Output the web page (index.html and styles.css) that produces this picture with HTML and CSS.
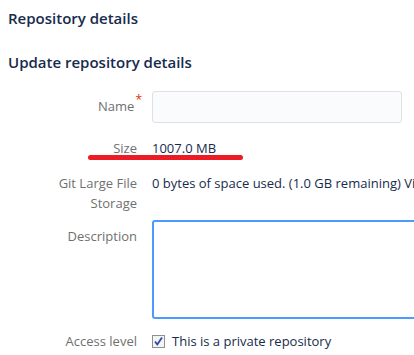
FILE: index.html
```html
<!DOCTYPE html>
<html lang="en">
<head>
    <meta charset="UTF-8">
    <meta name="viewport" content="width=device-width, initial-scale=1.0">
    <title>Repository details</title>
    <link rel="stylesheet" href="styles.css">
</head>
<body>

<h2 class="page-title">Repository details</h2>
<h3 class="section-title">Update repository details</h3>

<form class="details-form">
    <div class="row row-name">
        <label for="repoName">Name<span class="required">*</span></label>
        <div class="field"><input type="text" id="repoName"></div>
    </div>

    <div class="row row-size">
        <span class="label">Size</span>
        <div class="field value">1007.0 MB</div>
        <span class="scribble"></span>
    </div>

    <div class="row row-lfs">
        <span class="label">Git Large File<br>Storage</span>
        <div class="field value nowrap">0 bytes of space used. (1.0 GB remaining) View</div>
    </div>

    <div class="row row-desc">
        <label for="repoDesc">Description</label>
        <div class="field"><textarea id="repoDesc"></textarea></div>
    </div>

    <div class="row row-access">
        <span class="label">Access level</span>
        <div class="field value">
            <label class="check">
                <span class="box">
                    <svg width="13" height="13" viewBox="0 0 13 13">
                        <rect x="0.5" y="0.5" width="12" height="12" fill="#f4f4f4" stroke="#8e8f8f"/>
                        <path d="M3 6.5 L5.3 9.5 L10 2.5" fill="none" stroke="#2e49a5" stroke-width="1.8"/>
                    </svg>
                </span>
                This is a private repository
            </label>
        </div>
    </div>
</form>

</body>
</html>
```

FILE: styles.css
```css
html, body {
    overflow: hidden;
}
body {
    font-family: "Open Sans", Arial, sans-serif;
    font-size: 13px;
    line-height: 20px;
    color: #172b4d;
    margin: 0;
    padding: 0 8px;
}
.page-title,
.section-title {
    font-size: 15px;
    font-weight: 600;
    line-height: 20px;
    margin: 0;
}
.page-title {
    padding-top: 8px;
}
.section-title {
    margin-top: 24px;
}
.details-form {
    margin-top: 19px;
}
.row {
    position: relative;
    display: grid;
    grid-template-columns: 129px 1fr;
    column-gap: 15px;
}
.row > label,
.row > .label {
    color: #707070;
    text-align: right;
}
.required {
    color: #de350b;
    font-size: 12px;
    vertical-align: top;
    position: relative;
    top: -6px;
    margin-left: 1px;
    margin-right: -5px;
}
.row-name > label {
    padding-top: 5px;
}
.row-name input {
    width: 250px;
    height: 32px;
    box-sizing: border-box;
    border: 1px solid #dfe1e6;
    border-radius: 3px;
    background: #fafbfc;
}
.row-size {
    margin-top: 15px;
}
.row-lfs {
    margin-top: 15px;
}
.nowrap {
    white-space: nowrap;
}
.row-desc {
    margin-top: 7px;
}
.row-desc > label {
    padding-top: 6px;
}
.row-desc textarea {
    display: block;
    width: 330px;
    height: 99px;
    box-sizing: border-box;
    border: 2px solid #4c9aff;
    border-radius: 3px;
    background: #fff;
    resize: none;
}
.row-access {
    margin-top: 12px;
}
.check {
    display: inline-flex;
    align-items: center;
    gap: 7px;
}
.box {
    display: block;
    width: 13px;
    height: 13px;
    line-height: 0;
}
.scribble {
    position: absolute;
    left: 80px;
    top: 17px;
    width: 155px;
    height: 5px;
    border-radius: 3px;
    background: #ed1c24;
}
```
